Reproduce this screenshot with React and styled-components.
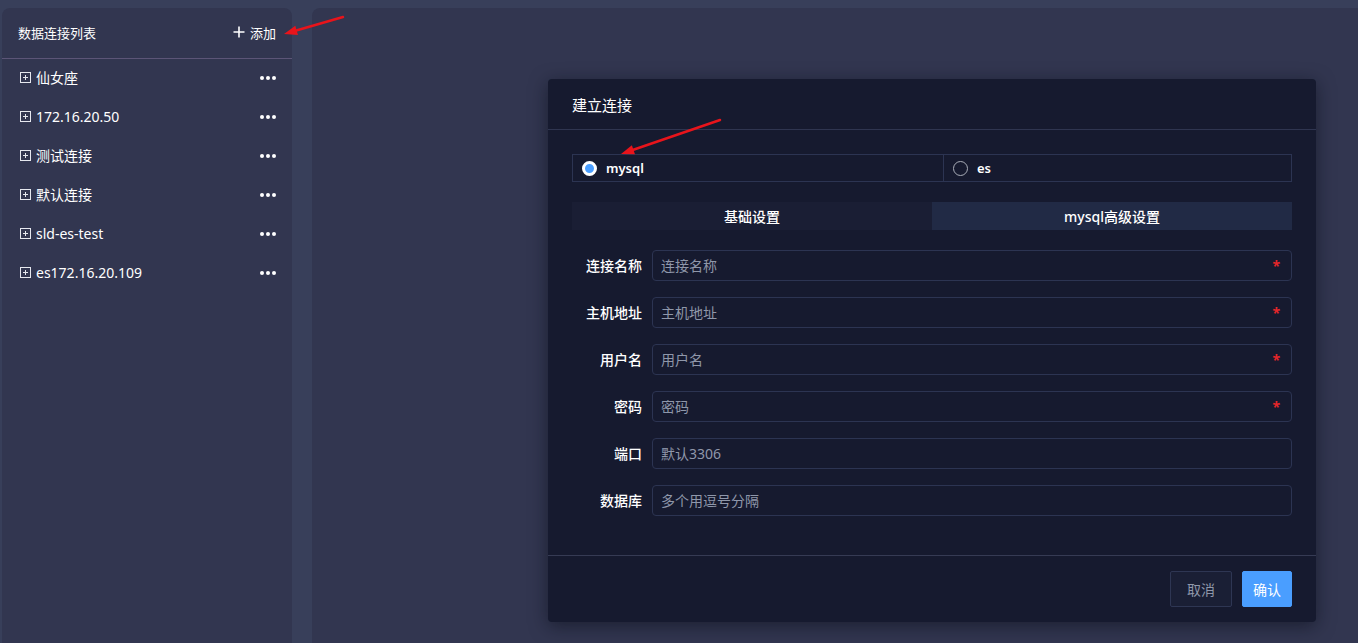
import React from "react";
import styled, { createGlobalStyle } from "styled-components";

const GlobalStyle = createGlobalStyle`
  html, body {
    margin: 0;
    padding: 0;
    background: #383f5a;
    font-family: "Noto Sans", "Noto Sans CJK SC", sans-serif;
    color: #e8eaf0;
  }
  * { box-sizing: border-box; }
`;

const connections = [
  "仙女座",
  "172.16.20.50",
  "测试连接",
  "默认连接",
  "sld-es-test",
  "es172.16.20.109",
];

const fields = [
  { label: "连接名称", placeholder: "连接名称", required: true },
  { label: "主机地址", placeholder: "主机地址", required: true },
  { label: "用户名", placeholder: "用户名", required: true },
  { label: "密码", placeholder: "密码", required: true },
  { label: "端口", placeholder: "默认3306" },
  { label: "数据库", placeholder: "多个用逗号分隔" },
];

const Page = styled.div`
  position: relative;
  display: flex;
  gap: 20px;
  height: 100vh;
  padding: 8px 0 0 2px;
  overflow: hidden;
`;

const Sidebar = styled.aside`
  width: 290px;
  flex-shrink: 0;
  background: #323650;
  border-radius: 8px 8px 0 0;
`;

const SidebarHeader = styled.div`
  display: flex;
  align-items: center;
  justify-content: space-between;
  height: 51px;
  padding: 0 16px 2px 16px;
  border-bottom: 1px solid #5c5577;
  font-size: 13px;
  color: #ffffff;
`;

const AddButton = styled.span`
  display: flex;
  align-items: center;
  gap: 5px;
  font-size: 13px;
  color: #ffffff;
`;

const ItemRow = styled.div`
  display: flex;
  align-items: center;
  height: 39px;
  padding: 0 16px 2px 18px;
  font-size: 14px;
  color: #ffffff;
`;

const ExpandBox = styled.span`
  position: relative;
  width: 11px;
  height: 11px;
  border: 1px solid #e6e8ef;
  margin-right: 5px;
  flex-shrink: 0;
  &::before, &::after {
    content: "";
    position: absolute;
    background: #e6e8ef;
  }
  &::before { left: 2px; right: 2px; top: 4px; height: 1px; }
  &::after { top: 2px; bottom: 2px; left: 4px; width: 1px; }
`;

const ItemName = styled.span`
  flex: 1;
  line-height: 20px;
`;

const Dots = styled.span`
  display: flex;
  gap: 2px;
  i {
    width: 4px;
    height: 4px;
    border-radius: 50%;
    background: #ffffff;
  }
`;

const Main = styled.main`
  position: relative;
  flex: 1;
  background: #323650;
  border-radius: 8px 0 0 0;
`;

const Modal = styled.div`
  position: absolute;
  left: 236px;
  top: 71px;
  width: 768px;
  height: 543px;
  background: #161a2f;
  border-radius: 4px;
  box-shadow: 0 4px 18px rgba(10, 12, 24, 0.55);
  display: flex;
  flex-direction: column;
`;

const ModalHeader = styled.div`
  height: 51px;
  display: flex;
  align-items: center;
  padding: 0 24px;
  font-size: 15px;
  color: #ffffff;
  border-bottom: 1px solid #2f3550;
`;

const ModalBody = styled.div`
  flex: 1;
  padding: 24px 24px 0;
`;

const RadioGroup = styled.div`
  display: grid;
  grid-template-columns: 370px 1fr;
  height: 28px;
  border: 1px solid #2c3452;
`;

const RadioCell = styled.label`
  display: flex;
  align-items: center;
  gap: 9px;
  padding-left: 9px;
  font-size: 13px;
  font-weight: 600;
  color: #ffffff;
  & + & { border-left: 1px solid #2c3452; }
`;

const RadioDot = styled.span`
  width: 15px;
  height: 15px;
  border-radius: 50%;
  border: ${(p) => (p.$checked ? "3px solid #ffffff" : "1px solid #a9adb8")};
  background: ${(p) => (p.$checked ? "#4a9eff" : "transparent")};
`;

const Tabs = styled.div`
  display: grid;
  grid-template-columns: 1fr 1fr;
  height: 28px;
  margin-top: 20px;
`;

const Tab = styled.div`
  display: flex;
  align-items: center;
  justify-content: center;
  font-size: 14px;
  font-weight: 500;
  color: #ffffff;
  background: ${(p) => (p.$active ? "#212a45" : "#1a1e34")};
`;

const Form = styled.div`
  display: flex;
  flex-direction: column;
  gap: 16px;
  margin-top: 20px;
`;

const FormRow = styled.div`
  display: grid;
  grid-template-columns: 70px 1fr;
  column-gap: 10px;
  align-items: center;
`;

const Label = styled.span`
  text-align: right;
  font-size: 14px;
  font-weight: 500;
  color: #ffffff;
  margin-top: -2px;
`;

const InputWrap = styled.div`
  position: relative;
  height: 31px;
  border: 1px solid #2c3452;
  border-radius: 4px;
  display: flex;
  align-items: center;
  padding: 0 6px;
`;

const Input = styled.input`
  flex: 1;
  background: transparent;
  border: none;
  outline: none;
  font-family: inherit;
  font-size: 14px;
  color: #ffffff;
  &::placeholder { color: #8f97aa; }
`;

const Required = styled.span`
  color: #e3262a;
  font-size: 14px;
  font-weight: 700;
  margin-right: 5px;
`;

const ModalFooter = styled.div`
  height: 67px;
  border-top: 1px solid #363b54;
  display: flex;
  justify-content: flex-end;
  align-items: flex-start;
  gap: 10px;
  padding: 15px 24px 0;
`;

const Button = styled.button`
  height: 36px;
  padding: 0 ${(p) => (p.$primary ? "10px" : "16px")};
  font-family: inherit;
  font-size: 14px;
  border-radius: 2px;
  border: 1px solid ${(p) => (p.$primary ? "#4a9eff" : "#2e3653")};
  background: ${(p) => (p.$primary ? "#4a9eff" : "#1a1f35")};
  color: ${(p) => (p.$primary ? "#ffffff" : "#8f97aa")};
`;

const Annotation = styled.svg`
  position: absolute;
  left: 0;
  top: 0;
  pointer-events: none;
`;

function Arrow({ x1, y1, x2, y2 }) {
  const ang = Math.atan2(y2 - y1, x2 - x1);
  const len = 14;
  const spread = 0.35;
  const a = [x2 - len * Math.cos(ang - spread), y2 - len * Math.sin(ang - spread)];
  const b = [x2 - len * Math.cos(ang + spread), y2 - len * Math.sin(ang + spread)];
  const bx = x2 - 10 * Math.cos(ang);
  const by = y2 - 10 * Math.sin(ang);
  return (
    <g>
      <line x1={x1} y1={y1} x2={bx} y2={by} stroke="#e8141b" strokeWidth="2.5" strokeLinecap="round" />
      <polygon points={`${x2},${y2} ${a[0]},${a[1]} ${b[0]},${b[1]}`} fill="#e8141b" />
    </g>
  );
}

export default function App() {
  return (
    <>
      <GlobalStyle />
      <Page>
        <Sidebar>
          <SidebarHeader>
            <span>数据连接列表</span>
            <AddButton>
              <svg width="12" height="12" viewBox="0 0 12 12">
                <path d="M6 0.5v11M0.5 6h11" stroke="#fff" strokeWidth="1.6" />
              </svg>
              添加
            </AddButton>
          </SidebarHeader>
          {connections.map((name) => (
            <ItemRow key={name}>
              <ExpandBox />
              <ItemName>{name}</ItemName>
              <Dots>
                <i />
                <i />
                <i />
              </Dots>
            </ItemRow>
          ))}
        </Sidebar>
        <Main>
          <Modal>
            <ModalHeader>建立连接</ModalHeader>
            <ModalBody>
              <RadioGroup>
                <RadioCell>
                  <RadioDot $checked />
                  mysql
                </RadioCell>
                <RadioCell>
                  <RadioDot />
                  es
                </RadioCell>
              </RadioGroup>
              <Tabs>
                <Tab>基础设置</Tab>
                <Tab $active>mysql高级设置</Tab>
              </Tabs>
              <Form>
                {fields.map((f) => (
                  <FormRow key={f.label}>
                    <Label>{f.label}</Label>
                    <InputWrap>
                      <Input placeholder={f.placeholder} />
                      {f.required && <Required>*</Required>}
                    </InputWrap>
                  </FormRow>
                ))}
              </Form>
            </ModalBody>
            <ModalFooter>
              <Button>取消</Button>
              <Button $primary>确认</Button>
            </ModalFooter>
          </Modal>
        </Main>
        <Annotation width="1358" height="643">
          <Arrow x1={343} y1={17} x2={284} y2={34} />
          <Arrow x1={720} y1={120} x2={621} y2={154} />
        </Annotation>
      </Page>
    </>
  );
}
